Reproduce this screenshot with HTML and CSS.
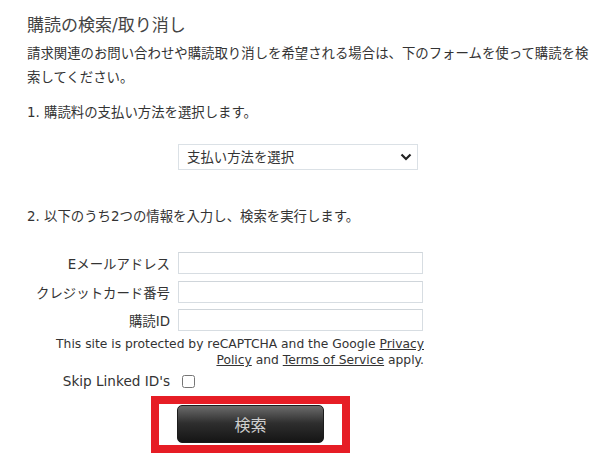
FILE: index.html
```html
<!DOCTYPE html>
<html lang="ja">
<head>
    <meta charset="UTF-8">
    <meta name="viewport" content="width=device-width, initial-scale=1.0">
    <title>購読の検索/取り消し</title>
    <link rel="stylesheet" href="styles.css">
</head>
<body>

    <h1>購読の検索/取り消し</h1>
    <p class="intro">請求関連のお問い合わせや購読取り消しを希望される場合は、下のフォームを使って購読を検索してください。</p>

    <p class="step step-one">1. 購読料の支払い方法を選択します。</p>
    <div class="select-box">
        <select id="paymentType">
            <option>支払い方法を選択</option>
            <option>クレジットカード</option>
            <option>請求書</option>
        </select>
        <svg class="chevron" width="12" height="8" viewBox="0 0 12 8">
            <path d="M1.5 1.5 L6 6 L10.5 1.5" fill="none" stroke="#222" stroke-width="2.2"/>
        </svg>
    </div>

    <p class="step step-two">2. 以下のうち2つの情報を入力し、検索を実行します。</p>

    <div class="lookup">
        <label for="email">Eメールアドレス</label>
        <input type="text" id="email">
        <label for="card">クレジットカード番号</label>
        <input type="text" id="card">
        <label for="subId">購読ID</label>
        <input type="text" id="subId">
    </div>

    <p class="recaptcha">This site is protected by reCAPTCHA and the Google <a href="#"><span>Privacy</span> <span>Policy</span></a> and <a href="#">Terms of Service</a> apply.</p>

    <div class="skip-row">
        <label for="skipLinked">Skip Linked ID's</label>
        <input type="checkbox" id="skipLinked">
    </div>

    <div class="highlight">
        <button type="button" onclick="runSearch()">検索</button>
    </div>

    <script>
        function runSearch() {
            const filled = ['email', 'card', 'subId'].filter(id => document.getElementById(id).value.trim() !== '');
            if (filled.length < 2) {
                alert('2つの情報を入力してください。');
            }
        }
    </script>

</body>
</html>
```

FILE: styles.css
```css
body {
    font-family: "DejaVu Sans", "Noto Sans CJK JP", sans-serif;
    margin: 0;
    padding: 0 3px 0 27px;
    background-color: #ffffff;
    color: #333333;
    font-size: 13.4px;
}
h1 {
    font-size: 17px;
    font-weight: normal;
    line-height: 24px;
    margin: 13px 0 0;
    color: #444444;
}
.intro {
    line-height: 24px;
    margin: 5px 0 0;
}
.step {
    line-height: 24px;
    margin: 0;
}
.step-one {
    margin-top: 11px;
}
.step-two {
    margin-top: 35px;
}
.select-box {
    position: relative;
    width: 240px;
    margin: 19px 0 0 151px;
}
.select-box select {
    appearance: none;
    -webkit-appearance: none;
    width: 240px;
    height: 26px;
    padding: 0 24px 0 8px;
    border: 1px solid #dbe1e6;
    border-radius: 0;
    background-color: #ffffff;
    color: #333333;
    font-family: inherit;
    font-size: 13.4px;
    outline: none;
}
.chevron {
    position: absolute;
    right: 6px;
    top: 9px;
    pointer-events: none;
}
.lookup {
    display: grid;
    grid-template-columns: 143px 245px;
    column-gap: 8px;
    row-gap: 6.5px;
    margin-top: 23px;
    align-items: center;
}
.lookup label {
    text-align: right;
    white-space: nowrap;
}
.lookup input {
    box-sizing: border-box;
    height: 22px;
    border: 1px solid #d7dde2;
    border-top-color: #cfd5da;
    outline: none;
    padding: 2px 4px;
}
.recaptcha {
    width: 397px;
    margin: 5px 0 0;
    text-align: right;
    font-size: 12.3px;
    line-height: 16px;
}
.recaptcha a {
    color: #333333;
}
.skip-row {
    display: grid;
    grid-template-columns: 143px auto;
    column-gap: 8px;
    align-items: center;
    margin-top: 5px;
    font-size: 13.6px;
}
.skip-row label {
    text-align: right;
}
.skip-row input {
    width: 13px;
    height: 13px;
    margin: 0 0 0 4px;
}
.highlight {
    display: inline-block;
    margin: 7px 0 0 124px;
    padding: 1px 18px 2px;
    border: 8px solid #e61d25;
}
.highlight button {
    display: block;
    width: 147px;
    height: 38px;
    border: 1px solid #1c1c1c;
    border-radius: 5px;
    background: linear-gradient(#6b6b6b, #2e2e2e 48%, #151515);
    color: #cfcfcf;
    font-family: inherit;
    font-size: 16px;
    cursor: pointer;
}
```
